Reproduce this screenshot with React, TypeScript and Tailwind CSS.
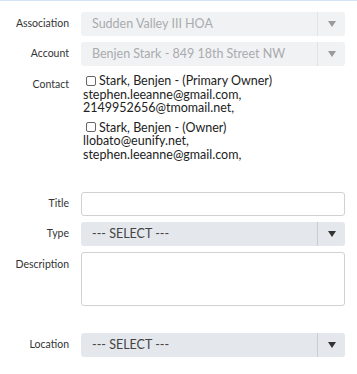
import React from "react";

const Label = ({ children, className = "" }: { children: React.ReactNode; className?: string }) => (
  <div className={`w-[69px] shrink-0 text-right text-[10.5px] text-[#333] ${className}`}>{children}</div>
);

const Caret = ({ color }: { color: string }) => (
  <svg width="8" height="6" viewBox="0 0 8 6">
    <path d="M0 0 H8 L4 6 Z" fill={color} />
  </svg>
);

const Select = ({ value, disabled }: { value: string; disabled?: boolean }) => (
  <div
    className={`flex h-6 w-[264px] items-center rounded-[3px] text-[12.5px] ${
      disabled ? "bg-[#f1f2f4] text-[#a9abae]" : "bg-[#e4e7eb] text-[#444]"
    }`}
  >
    <div className="flex-1 truncate pl-[11px]">{value}</div>
    <div
      className={`flex h-full w-[28px] items-center justify-center border-l ${
        disabled ? "border-[#e2e3e5]" : "border-[#c9cdd2]"
      }`}
    >
      <Caret color={disabled ? "#9a9a9a" : "#333"} />
    </div>
  </div>
);

const contacts = [
  { name: "Stark, Benjen - (Primary Owner)", emails: ["stephen.leeanne@gmail.com,", "2149952656@tmomail.net,"] },
  { name: "Stark, Benjen - (Owner)", emails: ["llobato@eunify.net,", "stephen.leeanne@gmail.com,"] },
];

export default function App() {
  return (
    <div
      className="h-[374px] w-[357px] overflow-hidden border-t border-[#d3e4f8] bg-white text-[#222]"
      style={{ fontFamily: 'Lato, "Open Sans", sans-serif' }}
    >
      <div className="flex flex-col pt-[11px]">
        <div className="flex items-center gap-[12px]">
          <Label>Association</Label>
          <Select value="Sudden Valley III HOA" disabled />
        </div>
        <div className="mt-[6px] flex items-center gap-[12px]">
          <Label>Account</Label>
          <Select value="Benjen Stark - 849 18th Street NW" disabled />
        </div>
        <div className="mt-[8px] flex gap-[12px]">
          <Label className="pt-[3px]">Contact</Label>
          <div className="flex flex-col gap-[6px] pl-[2px] text-[12.5px] leading-[13.5px] text-[#222]">
            {contacts.map((c) => (
              <div key={c.name}>
                <div className="flex items-center gap-[3px] pl-[3px]">
                  <span className="inline-block h-[10px] w-[10px] rounded-[2px] border border-[#666]" />
                  <span>{c.name}</span>
                </div>
                {c.emails.map((e) => (
                  <div key={e}>{e}</div>
                ))}
              </div>
            ))}
          </div>
        </div>
        <div className="mt-[31px] flex items-center gap-[12px]">
          <Label>Title</Label>
          <div className="h-6 w-[264px] rounded-[3px] border border-[#cfd1d4]" />
        </div>
        <div className="mt-[6px] flex items-center gap-[12px]">
          <Label>Type</Label>
          <Select value="--- SELECT ---" />
        </div>
        <div className="mt-[6px] flex gap-[12px]">
          <Label className="pt-[5px]">Description</Label>
          <div className="h-[54px] w-[264px] rounded-[3px] border border-[#cfd1d4]" />
        </div>
        <div className="mt-[27px] flex items-center gap-[12px]">
          <Label>Location</Label>
          <Select value="--- SELECT ---" />
        </div>
      </div>
    </div>
  );
}
